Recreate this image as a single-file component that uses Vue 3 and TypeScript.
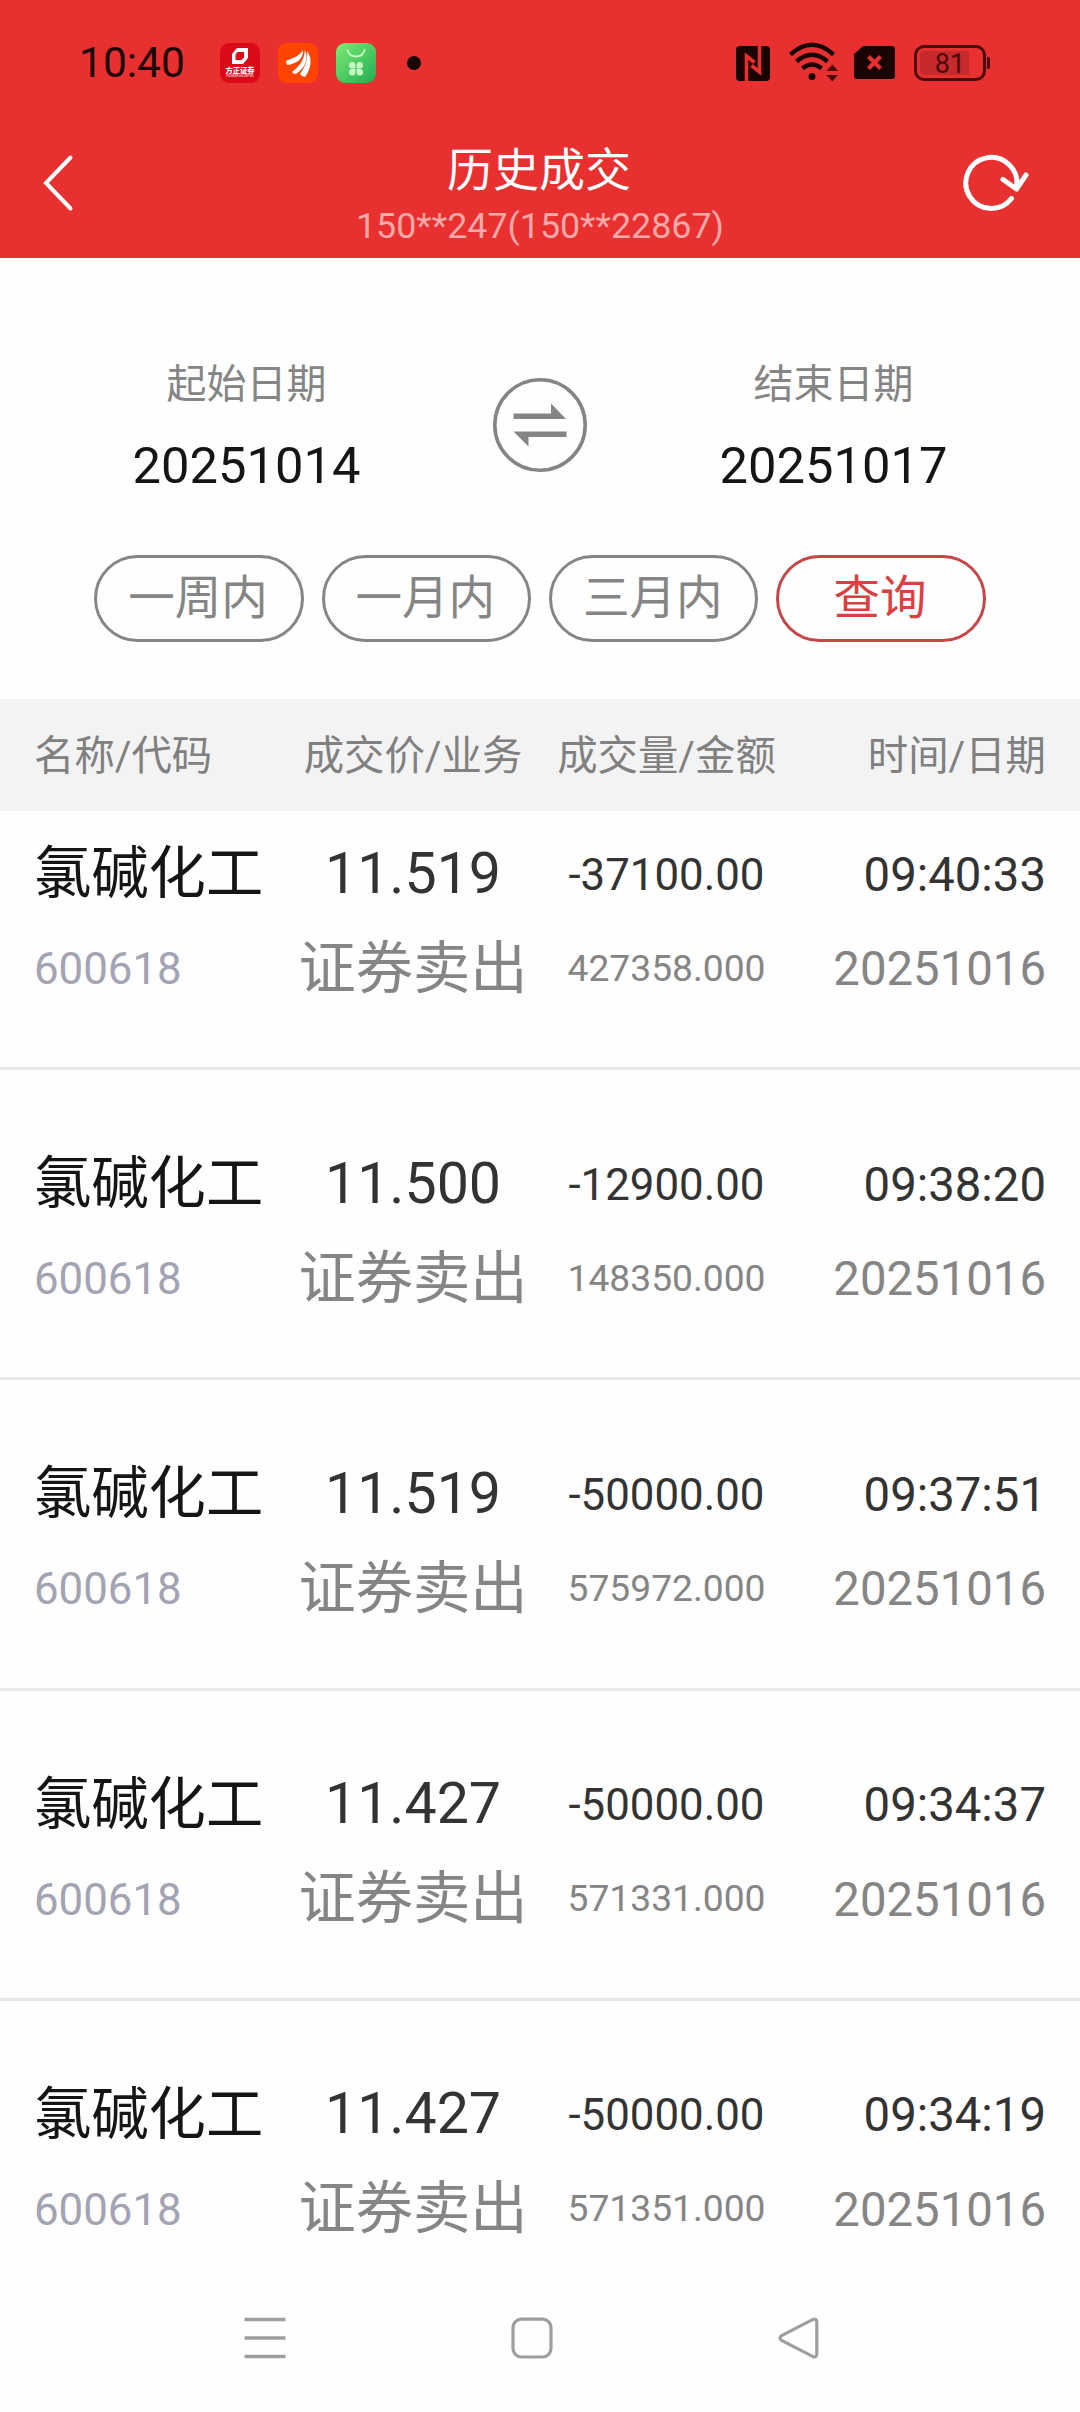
<script setup lang="ts">
interface Trade {
  name: string
  code: string
  price: string
  business: string
  volume: string
  amount: string
  time: string
  date: string
}

const sell = (price: string, volume: string, amount: string, time: string): Trade => ({
  name: '氯碱化工',
  code: '600618',
  price,
  business: '证券卖出',
  volume,
  amount,
  time,
  date: '20251016',
})

const trades: Trade[] = [
  sell('11.519', '-37100.00', '427358.000', '09:40:33'),
  sell('11.500', '-12900.00', '148350.000', '09:38:20'),
  sell('11.519', '-50000.00', '575972.000', '09:37:51'),
  sell('11.427', '-50000.00', '571331.000', '09:34:37'),
  sell('11.427', '-50000.00', '571351.000', '09:34:19'),
]

const columns = ['名称/代码', '成交价/业务', '成交量/金额', '时间/日期']
const ranges = ['一周内', '一月内', '三月内']
</script>

<template>
  <div class="screen">
    <header class="top">
      <div class="status">
        <span class="clock">10:40</span>
        <div class="apps">
          <div class="app founder">
            <svg width="16" height="16" viewBox="0 0 16 16">
              <path fill="#fff" fill-rule="evenodd" d="M5 0H16V10L11 16H0V6ZM5.500 4L3.500 6.500V12H9.500L12 9.500V4Z" />
            </svg>
            <span class="founder-name">方正证券</span>
            <span class="founder-sub">FOUNDER SECURITIES</span>
          </div>
          <svg class="app" viewBox="0 0 40 40">
            <rect width="40" height="40" rx="9" fill="#ff4400" />
            <path fill="#fff" d="M8 18C14 15 21 14 25 7C26 15 19 21 9 22Q8 20 8 18Z" />
            <path fill="#fff" d="M14 29C20 24 26 19 27 7C31 16 27 25 18 31Q15 31 14 29Z" />
            <path fill="#fff" d="M22 31C27 24 30 17 29 8C35 16 33 26 27 34Q24 34 22 31Z" />
          </svg>
          <svg class="app" viewBox="0 0 40 40">
            <defs>
              <linearGradient id="market" x1="0" y1="0" x2="1" y2="1">
                <stop offset="0" stop-color="#7fea74" />
                <stop offset="1" stop-color="#20ad52" />
              </linearGradient>
            </defs>
            <rect width="40" height="40" rx="9" fill="url(#market)" />
            <path d="M11.500 7Q13 13.500 20 13.500Q27 13.500 28.500 7" fill="none" stroke="#c5fbc3" stroke-width="1.800" stroke-linecap="round" />
            <g fill="#c5fbc3">
              <path d="M16.200 19a3.200 3.200 0 0 1 3.200 3.200v3.200h-3.200a3.200 3.200 0 0 1 0-6.400Z" />
              <path d="M23.800 19a3.200 3.200 0 0 0-3.200 3.200v3.200h3.200a3.200 3.200 0 0 0 0-6.400Z" />
              <path d="M16.200 32.400a3.200 3.200 0 0 0 3.200-3.200V26h-3.200a3.200 3.200 0 0 0 0 6.400Z" />
              <path d="M23.800 32.400a3.200 3.200 0 0 1-3.200-3.200V26h3.200a3.200 3.200 0 0 1 0 6.400Z" />
            </g>
          </svg>
        </div>
        <span class="dot"></span>
        <div class="indicators">
          <svg width="34" height="35" viewBox="0 0 34 35">
            <rect width="34" height="35" rx="4" fill="#1a0303" />
            <path d="M10.500 35V10L18.500 16.500M23.500 0V26L15.500 19.500" fill="none" stroke="#e83030" stroke-width="3.600" />
          </svg>
          <svg class="wifi" width="50" height="40" viewBox="0 0 50 40">
            <g fill="none" stroke="#1a0303" stroke-width="4.400">
              <path d="M1.500 12.500Q23 -7 44.500 12.500" />
              <path d="M7.500 19.500Q23 6 38.500 19.500" />
              <path d="M13.500 26.500Q23 18.500 32.500 26.500" />
            </g>
            <circle cx="23" cy="34.500" r="3.500" fill="#1a0303" />
            <path d="M37.500 29L43.300 22.500L49 29ZM37.500 33L43.300 39.500L49 33Z" fill="#4d0a0a" />
          </svg>
          <svg class="sim" width="41" height="33" viewBox="0 0 41 33">
            <path d="M9 0H38Q41 0 41 3V30Q41 33 38 33H3Q0 33 0 30V8Z" fill="#1a0303" />
            <path d="M14.500 10.500L26.500 22.500M26.500 10.500L14.500 22.500" stroke="#e83030" stroke-width="4" />
          </svg>
          <div class="battery"><span class="charge"></span><span class="percent">81</span></div>
          <span class="tip"></span>
        </div>
      </div>
      <div class="nav">
        <svg class="back" width="34" height="60" viewBox="0 0 34 60">
          <path d="M29.500 4.500L5 30L29.500 55.500" fill="none" stroke="#fff" stroke-width="4" stroke-linecap="round" />
        </svg>
        <div class="titles">
          <h1>历史成交</h1>
          <p>150**247(150**22867)</p>
        </div>
        <svg class="refresh" width="70" height="64" viewBox="0 0 70 64">
          <g fill="none" stroke="#fff" stroke-width="5" stroke-linecap="round" stroke-linejoin="round">
            <path d="M51.500 48.500A25.500 25.500 0 1 1 56.500 37" />
            <path d="M43 29.500L56.500 39L66 25" />
          </g>
        </svg>
      </div>
    </header>

    <section class="filter">
      <div class="dates">
        <div class="field"><label>起始日期</label><b>20251014</b></div>
        <svg class="swap" width="94" height="94" viewBox="0 0 94 94">
          <circle cx="47" cy="47" r="45.200" fill="none" stroke="#858585" stroke-width="3.600" />
          <path fill="#858585" d="M20.500 35.500H58V25.500L73 41H20.500ZM73.500 53.500H20.500L35.500 68.500V59H73.500Z" />
        </svg>
        <div class="field"><label>结束日期</label><b>20251017</b></div>
      </div>
      <div class="buttons">
        <button v-for="r in ranges" :key="r">{{ r }}</button>
        <button class="query">查询</button>
      </div>
    </section>

    <div class="cols head">
      <span v-for="c in columns" :key="c">{{ c }}</span>
    </div>

    <main class="list">
      <article v-for="t in trades" :key="t.time" class="trade">
        <div class="cols line1">
          <span class="name">{{ t.name }}</span>
          <span class="price">{{ t.price }}</span>
          <span class="volume">{{ t.volume }}</span>
          <span class="time">{{ t.time }}</span>
        </div>
        <div class="cols line2">
          <span class="code">{{ t.code }}</span>
          <span class="business">{{ t.business }}</span>
          <span class="amount">{{ t.amount }}</span>
          <span class="date">{{ t.date }}</span>
        </div>
      </article>
    </main>

    <footer class="system">
      <svg width="42" height="42" viewBox="0 0 42 42">
        <path d="M.500 2.500H41.500M.500 21H41.500M.500 39.500H41.500" stroke="#9e9e9e" stroke-width="3.600" />
      </svg>
      <svg width="42" height="42" viewBox="0 0 42 42">
        <rect x="2" y="2.200" width="38" height="37.800" rx="8.500" fill="none" stroke="#9e9e9e" stroke-width="3.200" />
      </svg>
      <svg width="42" height="42" viewBox="0 0 42 42">
        <path d="M3.600 18.600L34.500 2.600Q38.800 1 38.800 5V37Q38.800 41 34.500 39.400L3.600 23.400Q.500 21 3.600 18.600Z" fill="none" stroke="#9e9e9e" stroke-width="3.200" />
      </svg>
    </footer>
  </div>
</template>

<style>
body {
  margin: 0;
  background: #fefefe;
}
</style>

<style scoped>
.screen {
  width: 1080px;
  height: 2412px;
  display: flex;
  flex-direction: column;
  overflow: hidden;
  background: #fefefe;
  font-family: Roboto, 'Noto Sans CJK SC', sans-serif;
}
.screen svg {
  display: block;
  flex: none;
}
.top {
  height: 258px;
  flex: none;
  background: #e83030;
}
.status {
  height: 126px;
  box-sizing: border-box;
  padding-left: 79px;
  display: flex;
  align-items: center;
  color: #1a0303;
}
.clock {
  width: 141px;
  font-size: 42.5px;
  line-height: 50px;
}
.apps {
  display: flex;
  gap: 18px;
}
.app {
  width: 40px;
  height: 40px;
}
.founder {
  box-sizing: border-box;
  padding-top: 5px;
  border-radius: 9px;
  background: #dc0a19;
  color: #fff;
  display: flex;
  flex-direction: column;
  align-items: center;
  overflow: hidden;
}
.founder-name {
  margin-top: 2px;
  font-size: 7.3px;
  line-height: 9px;
  font-weight: 900;
  white-space: nowrap;
}
.founder-sub {
  font-size: 2.7px;
  line-height: 3px;
  white-space: nowrap;
}
.dot {
  width: 14px;
  height: 14px;
  margin-left: 31px;
  border-radius: 50%;
  background: #1a0303;
}
.indicators {
  margin-left: 315px;
  display: flex;
  align-items: center;
}
.wifi {
  margin-left: 19px;
  margin-top: -3px;
}
.sim {
  margin-left: 15px;
  margin-top: -2px;
}
.battery {
  position: relative;
  box-sizing: border-box;
  width: 72px;
  height: 36px;
  margin-left: 19px;
  margin-top: -1px;
  padding: 3px;
  border: 3px solid #4a0a0a;
  border-radius: 10px;
}
.charge {
  display: block;
  width: 49px;
  height: 24px;
  border-radius: 4px 0 0 4px;
  background: #c62a2c;
}
.percent {
  position: absolute;
  inset: 0;
  font-size: 27px;
  line-height: 32px;
  text-align: center;
  color: #4a0a0a;
}
.tip {
  width: 3px;
  height: 12px;
  margin-left: 1px;
  border-radius: 0 2px 2px 0;
  background: #4a0a0a;
}
.nav {
  height: 132px;
  display: flex;
  justify-content: space-between;
}
.back {
  margin: 27px 0 0 41px;
}
.refresh {
  margin: 24px 50px 0 0;
}
.titles {
  width: 400px;
  margin-left: 45px;
  text-align: center;
  color: #fff;
}
h1 {
  margin: 14px 0 0 -2px;
  font-size: 46px;
  line-height: 60px;
  font-weight: 400;
}
p {
  margin: 6px 0 0;
  font-size: 35.8px;
  line-height: 40px;
  color: #ffa9a9;
}
.filter {
  height: 441px;
  flex: none;
}
.dates {
  height: 297px;
  box-sizing: border-box;
  padding: 98px 93px 0;
  display: flex;
  justify-content: space-between;
}
.field {
  width: 307px;
  text-align: center;
}
label,
b {
  display: block;
  font-weight: 400;
}
label {
  font-size: 40px;
  line-height: 58px;
  color: #858585;
}
b {
  margin-top: 22px;
  font-size: 50.7px;
  line-height: 60px;
  color: #151515;
}
.swap {
  margin-top: 22px;
}
.buttons {
  display: flex;
  justify-content: center;
  gap: 18px;
}
button {
  width: 209.3px;
  height: 87px;
  padding: 0 2px 1px 0;
  border: 3px solid #858585;
  border-radius: 44px;
  background: none;
  font-family: inherit;
  font-size: 46.5px;
  line-height: 60px;
  color: #858585;
}
.query {
  border-color: #ca4445;
  color: #da4041;
}
.cols {
  display: grid;
  grid-template-columns: 257px 244px 263px 248px;
  padding-left: 34px;
  align-items: center;
  text-align: center;
  white-space: nowrap;
}
.cols > :first-child {
  text-align: left;
}
.cols > :last-child {
  text-align: right;
}
.head {
  height: 112px;
  box-sizing: border-box;
  padding-bottom: 6px;
  flex: none;
  background: #f3f3f3;
  color: #808080;
  font-size: 40.4px;
}
.list {
  height: 1489px;
  flex: none;
  overflow: hidden;
}
.trade {
  height: 310.2px;
  box-sizing: border-box;
  padding-top: 65px;
  border-bottom: 3px solid #e8e8e8;
}
.trade:first-child {
  margin-top: -51px;
}
.trade:last-child {
  border-bottom: 0;
}
.line1 {
  height: 96px;
  color: #333;
}
.line2 {
  height: 93px;
  color: #858585;
}
.name {
  font-size: 57.3px;
  color: #151515;
}
.price,
.business {
  font-size: 57.3px;
}
.name,
.business {
  padding-bottom: 9px;
}
.volume,
.time,
.code,
.date {
  padding-top: 3px;
}
.volume,
.code {
  font-size: 43.8px;
}
.code {
  color: #a3a3b3;
}
.amount {
  font-size: 37.2px;
}
.time,
.date {
  font-size: 47.3px;
}
.system {
  flex: 1;
  display: flex;
  gap: 225px;
  padding: 17px 0 0 244px;
}
</style>
